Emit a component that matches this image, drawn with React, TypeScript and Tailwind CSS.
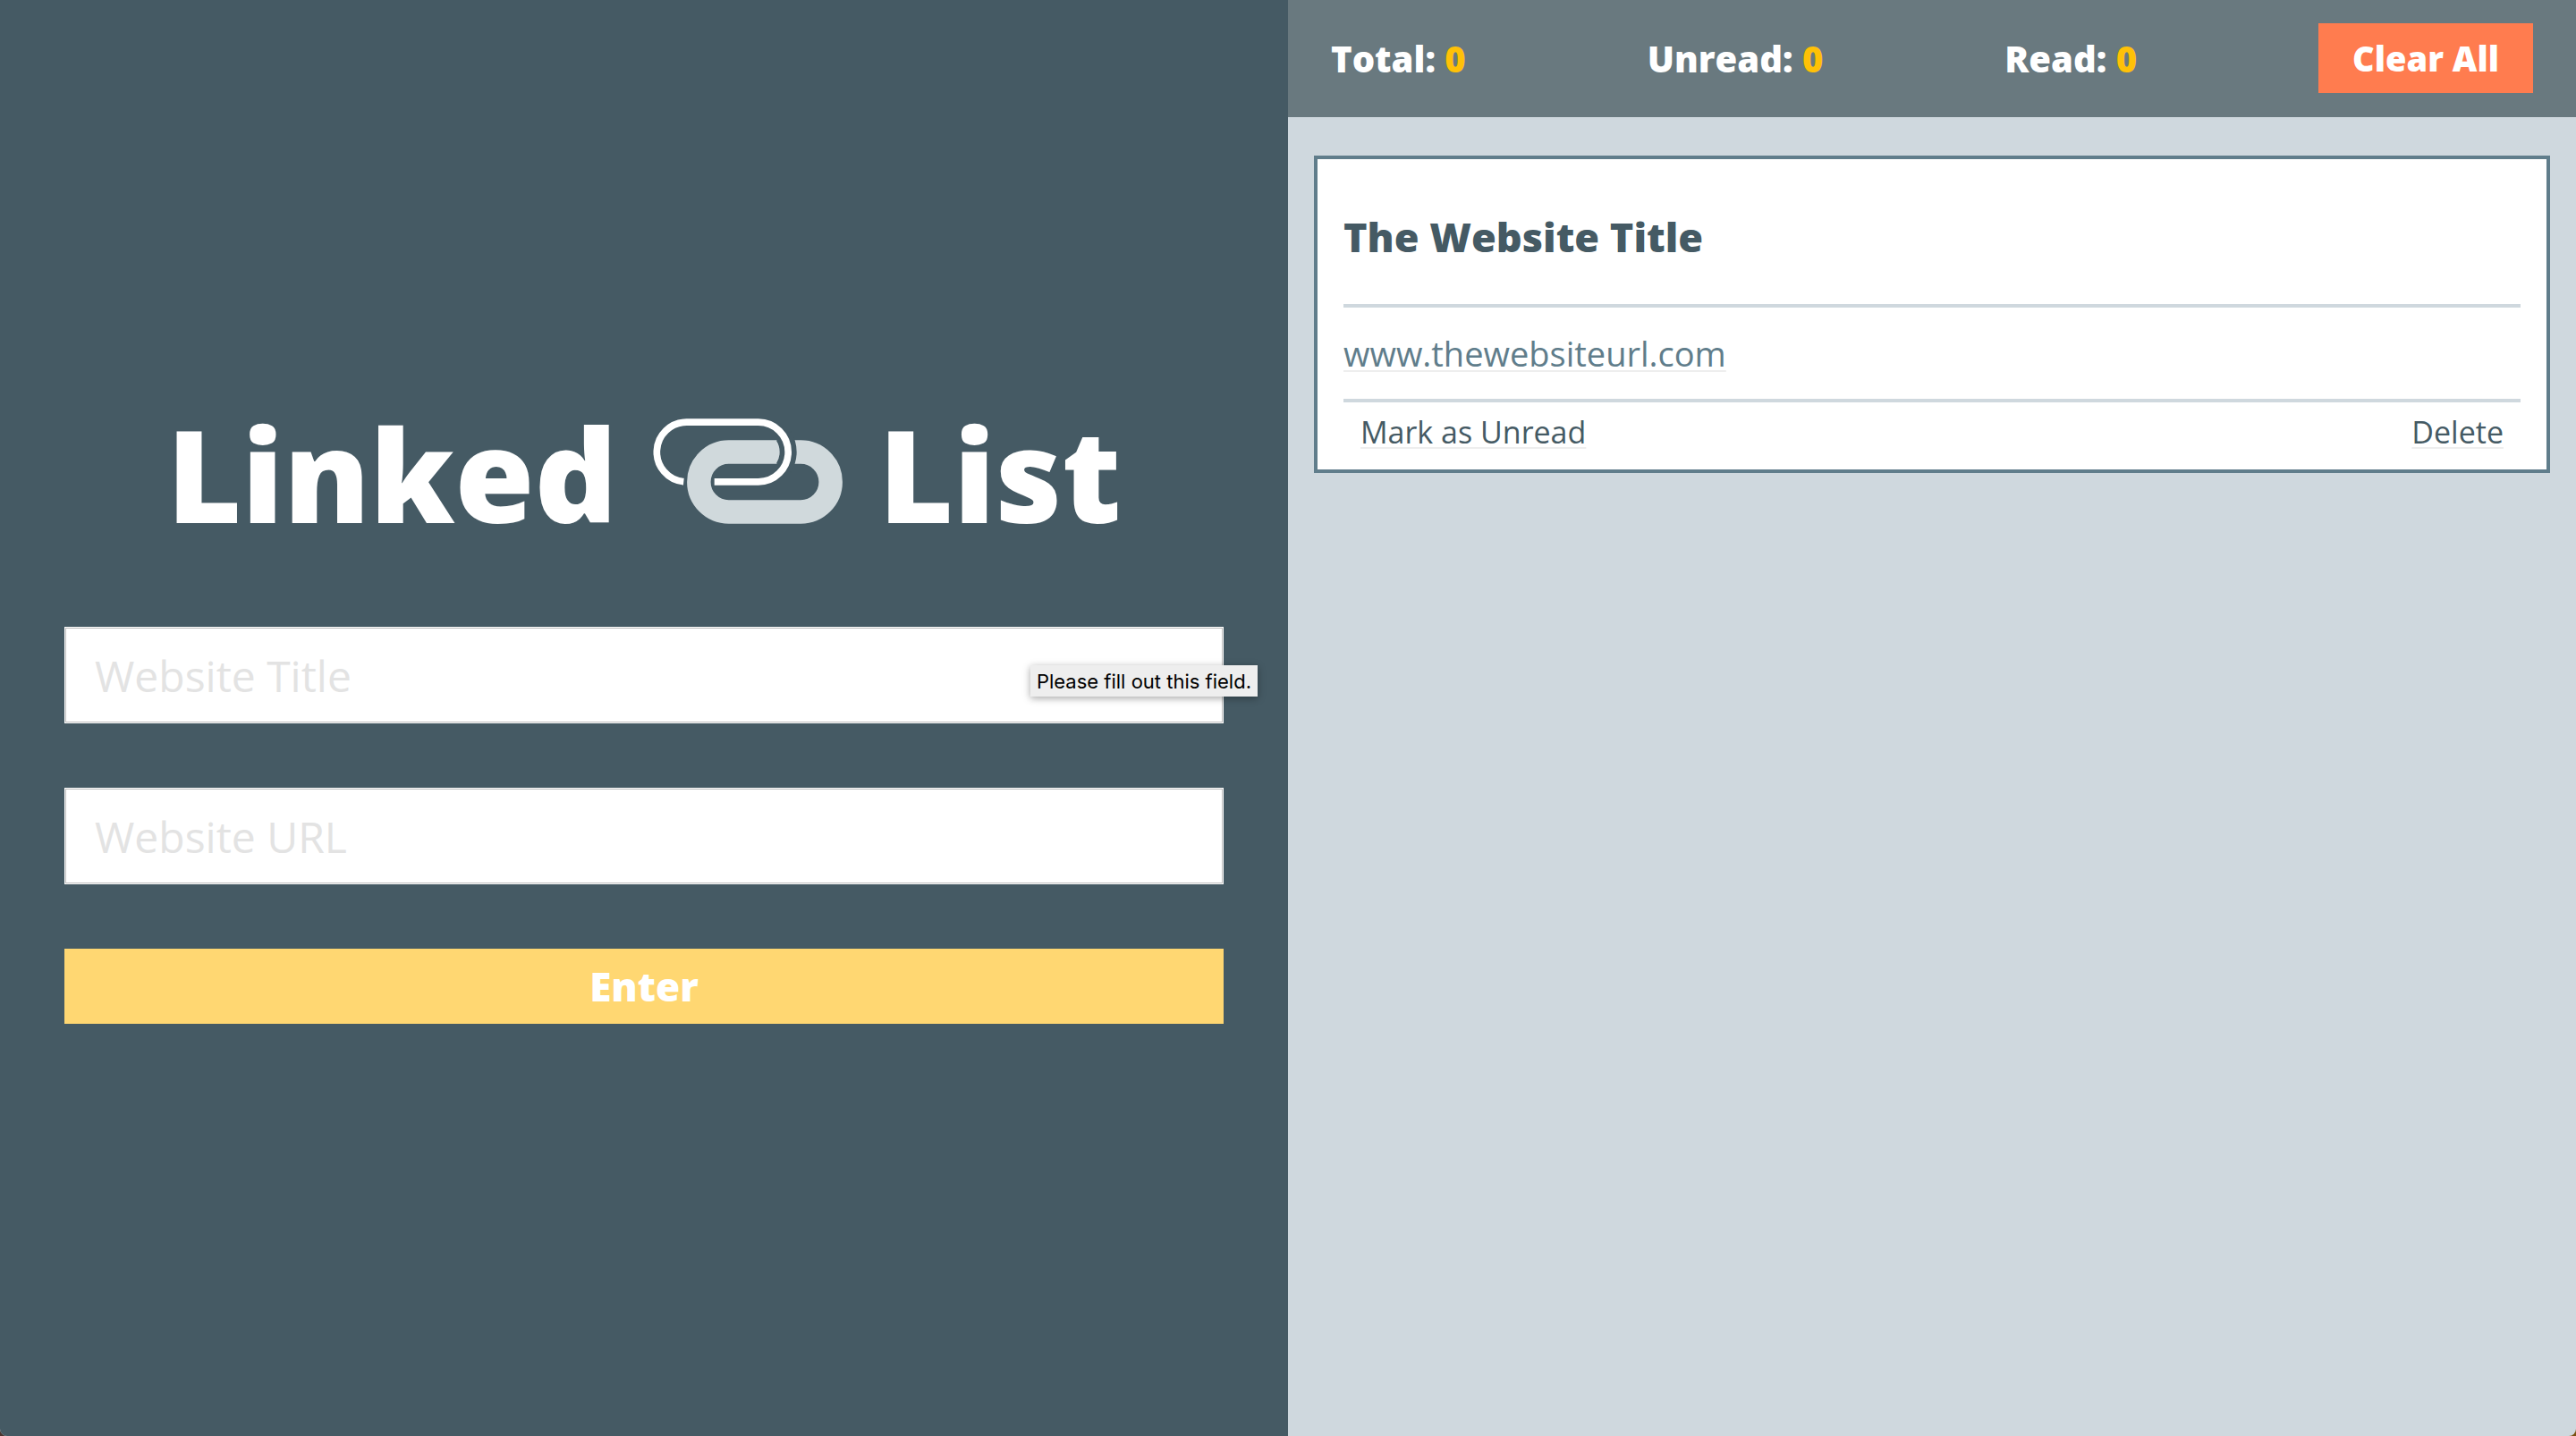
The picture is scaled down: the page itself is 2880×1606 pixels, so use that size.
import React from "react";

function LinkLogo() {
  return (
    <svg viewBox="87 81 636 354" className="mb-1 w-[212px] shrink-0" fill="none" aria-hidden="true">
      <rect x="241" y="193.5" width="442" height="201" rx="100.5" stroke="#d0d9dc" strokeWidth="79.5" />
      <path d="M525 140A100 100 0 0 1 525 247" stroke="#455a64" strokeWidth="57" />
      <path
        d="M190 293A100 100 0 0 1 199.5 93.5H440.5A100 100 0 0 1 440.5 293.5H293"
        stroke="#ffffff"
        strokeWidth="23"
      />
    </svg>
  );
}

function Field({ id, label, hint }: { id: string; label: string; hint?: string }) {
  return (
    <div className="relative">
      <input
        id={id}
        type="text"
        required
        aria-label={label}
        placeholder={label}
        className="block h-[108px] w-full border border-white bg-white px-[33px] text-5xl text-[#455a64] shadow-[inset_0_0_0_1px_#bdbdbd] outline-none placeholder:text-[#e3e3e3]"
      />
      {hint && (
        <span
          role="tooltip"
          className="absolute -right-[38px] top-[43px] flex h-[35px] items-center bg-[#eeeeee] px-[7px] font-['Inter',sans-serif] text-[22px] leading-none whitespace-nowrap text-black shadow-[0_2px_8px_rgba(0,0,0,0.35)]"
        >
          {hint}
        </span>
      )}
    </div>
  );
}

function Stat({ name, value }: { name: string; value: number }) {
  return (
    <p className="pt-px">
      {name}: <span className="text-[#ffc107]">{value}</span>
    </p>
  );
}

function CardAction({ children }: { children: React.ReactNode }) {
  return (
    <button
      type="button"
      className="underline decoration-[#eeeeee] decoration-2 underline-offset-4 [text-decoration-skip-ink:none]"
    >
      {children}
    </button>
  );
}

export default function App() {
  return (
    <div className="bg-linear-to-r from-[#4a3530] to-[#7a5010] font-['Open_Sans',sans-serif]">
      <div className="grid min-h-screen grid-cols-2 overflow-hidden rounded-b-lg bg-[#cfd8de]">
        <section className="flex flex-col justify-center bg-[#455a64] px-[72px] pb-[30px]">
          <h1 className="mb-[74px] flex items-center justify-center gap-10 text-[144px] leading-[196px] font-extrabold text-white">
            <span>Linked</span>
            <LinkLogo />
            <span>List</span>
          </h1>
          <form className="flex flex-col gap-[72px]" onSubmit={(e) => e.preventDefault()}>
            <Field id="title" label="Website Title" hint="Please fill out this field." />
            <Field id="url" label="Website URL" />
            <button type="submit" className="h-[84px] bg-[#ffd772] text-[44px] leading-none font-extrabold text-white">
              Enter
            </button>
          </form>
        </section>
        <main>
          <header className="flex items-center justify-between bg-[#69797f] px-12 pt-[26px] pb-[27px] text-[40px] leading-[54px] font-extrabold text-white">
            <Stat name="Total" value={0} />
            <Stat name="Unread" value={0} />
            <Stat name="Read" value={0} />
            <button type="button" className="bg-[#ff7c4f] px-[38px] py-3 text-[38px]">
              Clear All
            </button>
          </header>
          <article className="mx-[29px] mt-[43px] border-4 border-[#607d8b] bg-white px-[29px] text-[#455a64]">
            <h2 className="border-b-4 border-[#cfd8de] pt-14 pb-11 text-[45px] leading-[62px] font-extrabold">
              The Website Title
            </h2>
            <p className="border-b-4 border-[#cfd8de] py-6 text-[38px] leading-[54px]">
              <a
                href="http://www.thewebsiteurl.com"
                className="text-[#607d8b] underline decoration-[#eeeeee] decoration-2 underline-offset-4 [text-decoration-skip-ink:none]"
              >
                www.thewebsiteurl.com
              </a>
            </p>
            <div className="flex justify-between px-[19px] pt-[9px] pb-[17px] text-[34px] leading-[49px]">
              <CardAction>Mark as Unread</CardAction>
              <CardAction>Delete</CardAction>
            </div>
          </article>
        </main>
      </div>
    </div>
  );
}
